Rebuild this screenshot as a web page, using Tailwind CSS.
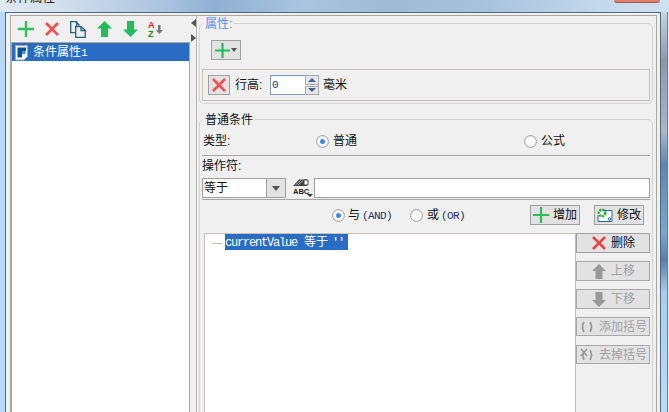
<!DOCTYPE html>
<html lang="en">
<head>
    <meta charset="UTF-8">
    <title>条件属性</title>
    <script src="https://cdn.jsdelivr.net/npm/@tailwindcss/browser@4"></script>
</head>
<body class="m-0 bg-white">
<div class="relative w-[669px] h-[412px] overflow-hidden font-['Liberation_Sans','Noto_Sans_CJK_SC',sans-serif] text-[12px] leading-[14px] text-[#111] bg-[linear-gradient(90deg,#dfe9f2_0%,#cfdeec_10%,#a9c3de_25%,#8fb0d2_32%,#a8c4df_45%,#9fbbd6_58%,#a6c2dc_72%,#c3d9ec_90%,#cfe1f0_100%)]">

    <!-- title bar, cut off at the top of the shot -->
    <div class="h-[12px] overflow-hidden pl-[5px]">
        <div class="-mt-[9px] text-[12.5px] leading-[14px] text-[#222]">条件属性</div>
    </div>
    <div class="absolute left-[614px] top-0 w-[46px] h-[3px] rounded-b-[3px] bg-[#e0806c] border-b border-[#a05a50]"></div>

    <div class="flex h-[400px]">
        <div class="w-[5px] shrink-0 bg-[#b9d9f8]"></div>

        <!-- window -->
        <div class="w-[656px] shrink-0 border-x border-t border-[#51697f] bg-[#f0f0f0] pl-[4px] pr-[3px] pt-[2px]">
            <div class="flex h-[400px] border-x border-t border-[#aca899]">

                <!-- left pane -->
                <div class="w-[179px] shrink-0 flex flex-col">
                    <div class="h-[26px] relative flex items-center pl-[7px] gap-[10px]">
                        <svg width="16" height="16" viewBox="0 0 16 16"><path d="M8 0v16M0 8h16" stroke="#33bd5f" stroke-width="2.4"/></svg>
                        <svg width="16" height="16" viewBox="0 0 16 16"><path d="M2 2l12 12M14 2L2 14" stroke="#ef4f4f" stroke-width="2.6"/></svg>
                        <svg width="16" height="17" viewBox="0 0 16 17" fill="none" stroke="#23607f" stroke-width="1.3"><path d="M.7.7h6v11h-6zM6 .7l3 3v2"/><path fill="#f0f0f0" d="M5.7 5.7h5.5l4 3.5v7.1H5.7z"/><path d="M11 5.7v3.8h4"/></svg>
                        <svg width="15" height="16" viewBox="0 0 15 16" class="ml-[1px]"><path d="M7.5 0L15 7.5h-4V16H4V7.5H0z" fill="#1fbd5c"/></svg>
                        <svg width="15" height="16" viewBox="0 0 15 16" class="ml-[1px]"><path d="M7.5 16L15 8.5h-4V0H4v8.500H0z" fill="#1fbd5c"/></svg>
                        <svg width="16" height="18" viewBox="0 0 16 18"><text x="0" y="8" font-size="9" font-weight="700" font-family="Liberation Sans" fill="#f02020">A</text><text x="0" y="17" font-size="9" font-weight="700" font-family="Liberation Sans" fill="#109010">Z</text><path d="M10 5h2.500v5H15l-3.700 4-3.300-4h2z" fill="#777"/></svg>
                    </div>
                    <div class="flex-1 border-x border-t border-[#aca899] bg-white">
                        <div class="h-[18px] flex items-center pl-[3px] pt-[1px] bg-[#2a6cc4] text-white">
                            <svg width="14" height="16" viewBox="0 0 14 16" class="mr-[4px]"><path d="M.5.500h12v11l-3.500 3.500H.5z" fill="#fff" stroke="#9aa6b2"/><path d="M2.500 2.500h8.500v3.500H7v6.500H2.500z" fill="#0f4c9a"/><path d="M7 6h3.500v3H7z" fill="#2d9be8"/></svg>
                            <span>条件属性<span class="font-['Liberation_Mono'] text-[11px]">1</span></span>
                        </div>
                    </div>
                </div>

                <!-- splitter -->
                <div class="w-[6px] shrink-0 flex flex-col items-center gap-[7px] pt-[3px]">
                    <div class="w-0 h-0 border-y-[4px] border-y-transparent border-r-[5px] border-r-[#555]"></div>
                    <div class="w-0 h-0 border-y-[4px] border-y-transparent border-l-[5px] border-l-[#555]"></div>
                </div>

                <!-- right pane -->
                <div class="w-[460px] shrink-0 border-l border-[#b4b4b4] pl-[2px] pr-[3px]">

                    <fieldset class="h-[88px] border border-[#d4d4d4] rounded-[5px] pl-[2px] pr-[2px]">
                        <legend class="ml-[1px] px-[2px] translate-y-[1px] text-[#5b8ff0]">属性:</legend>
                        <button class="mt-[10px] ml-[9px] w-[30px] h-[20px] flex items-center justify-center gap-[1px] bg-[#e2e2e2] border border-[#a0a0a0]">
                            <svg width="15" height="15" viewBox="0 0 15 15"><path d="M7.500 0v15M0 7.500h15" stroke="#1fc05c" stroke-width="2.200"/></svg>
                            <span class="w-0 h-0 border-x-[3.500px] border-x-transparent border-t-[4px] border-t-[#555]"></span>
                        </button>
                        <div class="mt-[9px] h-[32px] border border-[#c6c3b5] flex items-center pl-[5px]">
                            <button class="w-[22px] h-[20px] flex items-center justify-center bg-[#e2e2e2] border border-[#a0a0a0]">
                                <svg width="14" height="14" viewBox="0 0 14 14"><path d="M1 1l12 12M13 1L1 13" stroke="#ef4f4f" stroke-width="2.500"/></svg>
                            </button>
                            <span class="ml-[5px] w-[35px]">行高:</span>
                            <div class="w-[49px] h-[20px] flex border border-[#7f9db9] bg-white">
                                <span class="flex-1 pl-[1px] font-['Liberation_Mono'] text-[11px] leading-[18px] text-[#123a7a]">0</span>
                                <div class="w-[14px] flex flex-col gap-[1px] -my-[1px] -mr-[1px]">
                                    <div class="flex-1 flex items-center justify-center bg-[#e4e8ee] border border-[#a8a8a8]"><span class="w-0 h-0 border-x-[4px] border-x-transparent border-b-[4px] border-b-[#46618a]"></span></div>
                                    <div class="flex-1 flex items-center justify-center bg-[#e4e8ee] border border-[#a8a8a8]"><span class="w-0 h-0 border-x-[4px] border-x-transparent border-t-[4px] border-t-[#46618a]"></span></div>
                                </div>
                            </div>
                            <span class="ml-[4px]">毫米</span>
                        </div>
                    </fieldset>

                    <fieldset class="mt-[8px] h-[320px] border border-[#d4d4d4] rounded-[5px]">
                        <legend class="ml-[3px] px-[2px] translate-y-[1px]">普通条件</legend>

                        <div class="h-[29px] flex items-center pl-[3px] pt-[1px]">
                            <span class="w-[113px]">类型:</span>
                            <span class="w-[13px] h-[13px] rounded-full border border-[#a8a8a8] bg-white flex items-center justify-center shadow-[inset_0_0_2px_#bbb]"><span class="w-[5px] h-[5px] rounded-full bg-[#3f87f0]"></span></span>
                            <span class="ml-[4px] w-[191px]">普通</span>
                            <span class="w-[13px] h-[13px] rounded-full border border-[#a8a8a8] bg-white shadow-[inset_0_0_2px_#bbb]"></span>
                            <span class="ml-[4px]">公式</span>
                        </div>
                        <div class="ml-[2px] mr-[2px] border-t border-[#a6a6a6]"></div>

                        <div class="pl-[2px] pt-[3px] h-[22px]">操作符:</div>
                        <div class="pl-[2px] pr-[2px] flex items-center h-[20px]">
                            <div class="w-[84px] h-[20px] flex border border-[#a0a0a0] bg-white">
                                <span class="flex-1 pl-[1px] leading-[18px]">等于</span>
                                <span class="w-[19px] flex items-center justify-center bg-[#e2e2e2] border-l border-[#a0a0a0]"><span class="w-0 h-0 border-x-[4.500px] border-x-transparent border-t-[5px] border-t-[#555]"></span></span>
                            </div>
                            <svg width="22" height="20" viewBox="0 0 22 20" class="ml-[6px] shrink-0">
                                <path d="M1 8l6-6.500h8V8H4z" fill="#444"/><path d="M3.500 7l5-4.500M6 7l5-4.500" stroke="#ddd" stroke-width=".7"/><path d="M12 2h4v5h-4z" fill="#fff" stroke="#444"/>
                                <text x="1" y="15.500" font-size="7.500" font-weight="700" font-family="Liberation Sans" fill="#222">ABC</text>
                                <path d="M15 16h6l-3 3z" fill="#333"/>
                            </svg>
                            <div class="flex-1 h-[20px] border border-[#a0a0a0] bg-white"></div>
                        </div>
                        <div class="ml-[2px] mr-[2px] mt-[1px] border-t border-[#a6a6a6]"></div>

                        <div class="relative h-[33px] flex items-center pl-[132px] pb-[3px]">
                            <span class="w-[13px] h-[13px] rounded-full border border-[#a8a8a8] bg-white flex items-center justify-center shadow-[inset_0_0_2px_#bbb]"><span class="w-[5px] h-[5px] rounded-full bg-[#3f87f0]"></span></span>
                            <span class="ml-[3px] w-[62px]">与<span class="ml-[2px] font-['Liberation_Mono'] text-[11px] tracking-[-0.600px] text-[#1d2a6e]">(AND)</span></span>
                            <span class="w-[13px] h-[13px] rounded-full border border-[#a8a8a8] bg-white shadow-[inset_0_0_2px_#bbb]"></span>
                            <span class="ml-[4px] w-[103px]">或<span class="ml-[2px] font-['Liberation_Mono'] text-[11px] tracking-[-0.600px] text-[#1d2a6e]">(OR)</span></span>
                            <button class="w-[50px] h-[20px] flex items-center pl-[2px] bg-[#e2e2e2] border border-[#a0a0a0]">
                                <svg width="16" height="16" viewBox="0 0 16 16"><path d="M8 0v16M0 8h16" stroke="#2fbb55" stroke-width="2.200"/></svg>
                                <span class="ml-[4px]">增加</span>
                            </button>
                            <button class="ml-[14px] w-[50px] h-[20px] flex items-center pl-[2px] bg-[#e2e2e2] border border-[#a0a0a0]">
                                <svg width="16" height="14" viewBox="0 0 16 14"><path d="M5 2.500h10v11H1V7" fill="#fff" stroke="#1f66a8"/><circle cx="5" cy="5" r="3.200" fill="none" stroke="#2fa83f" stroke-width="2.600" stroke-dasharray="2 1"/><circle cx="12.500" cy="11" r="1.300" fill="none" stroke="#1f66a8"/></svg>
                                <span class="ml-[4px]">修改</span>
                            </button>
                        </div>

                        <div class="flex">
                            <div class="ml-[4px] w-[372px] h-[200px] border border-b-0 border-[#c6c3b5] bg-white relative pl-[20px]">
                                <div class="absolute left-[7px] top-[9px] w-[10px] border-t border-[#c6c3b5]"></div>
                                <div class="w-[123px] h-[16px] bg-[#2a6cc4] text-white leading-[16px] whitespace-nowrap"><span class="font-['Liberation_Mono'] tracking-[-1.200px]">currentValue </span><span class="ml-[1px]">等于</span><span class="font-['Liberation_Mono'] ml-[4px] tracking-[-1.200px]">''</span></div>
                            </div>
                            <div class="w-[74px] flex flex-col gap-[8px]">
                                <button class="h-[20px] flex items-center pl-[15px] bg-[#e2e2e2] border border-[#a0a0a0]">
                                    <svg width="14" height="14" viewBox="0 0 14 14"><path d="M1 1l12 12M13 1L1 13" stroke="#ef4040" stroke-width="2.500"/></svg>
                                    <span class="ml-[5px]">删除</span>
                                </button>
                                <button class="h-[20px] flex items-center pl-[15px] bg-[#e2e2e2] border border-[#a8a8a8] text-[#a0a0a0]">
                                    <svg width="14" height="15" viewBox="0 0 14 15"><path d="M7 0l7 7h-3.500v8h-7V7H0z" fill="#999"/></svg>
                                    <span class="ml-[5px]">上移</span>
                                </button>
                                <button class="h-[20px] flex items-center pl-[15px] bg-[#e2e2e2] border border-[#a8a8a8] text-[#a0a0a0]">
                                    <svg width="14" height="15" viewBox="0 0 14 15"><path d="M7 15l7-7h-3.500V0h-7v8H0z" fill="#999"/></svg>
                                    <span class="ml-[5px]">下移</span>
                                </button>
                                <button class="h-[19px] flex items-center pl-[3px] bg-[#e2e2e2] border border-[#a8a8a8] text-[#a0a0a0]">
                                    <svg width="14" height="12" viewBox="0 0 14 12" fill="none" stroke="#999" stroke-width="1.800"><path d="M4 1Q1 6 4 11M10 1q3 5 0 10"/></svg>
                                    <span class="ml-[5px]">添加括号</span>
                                </button>
                                <button class="mt-[1px] h-[19px] flex items-center pl-[3px] bg-[#e2e2e2] border border-[#a8a8a8] text-[#a0a0a0]">
                                    <svg width="14" height="13" viewBox="0 0 14 13" fill="none" stroke="#999" stroke-width="1.600"><path d="M1 1l6 7M7 1L1 8M4 3Q2 7 4 12M10 2q3 5 0 10"/></svg>
                                    <span class="ml-[5px]">去掉括号</span>
                                </button>
                            </div>
                        </div>
                    </fieldset>
                </div>
            </div>
        </div>

        <!-- desktop behind the window -->
        <div class="w-[6px] shrink-0 bg-[linear-gradient(180deg,#c2d6e6_0%,#8e99a4_12%,#a9b8c6_30%,#5f85ad_38%,#7ba6d0_55%,#5a7fa8_62%,#a6cdf0_70%,#bcdcf8_100%)]"></div>
        <div class="w-[2px] shrink-0 bg-[#e8eef4] border-l border-[#6d7d8c]"></div>
    </div>
</div>
</body>
</html>
